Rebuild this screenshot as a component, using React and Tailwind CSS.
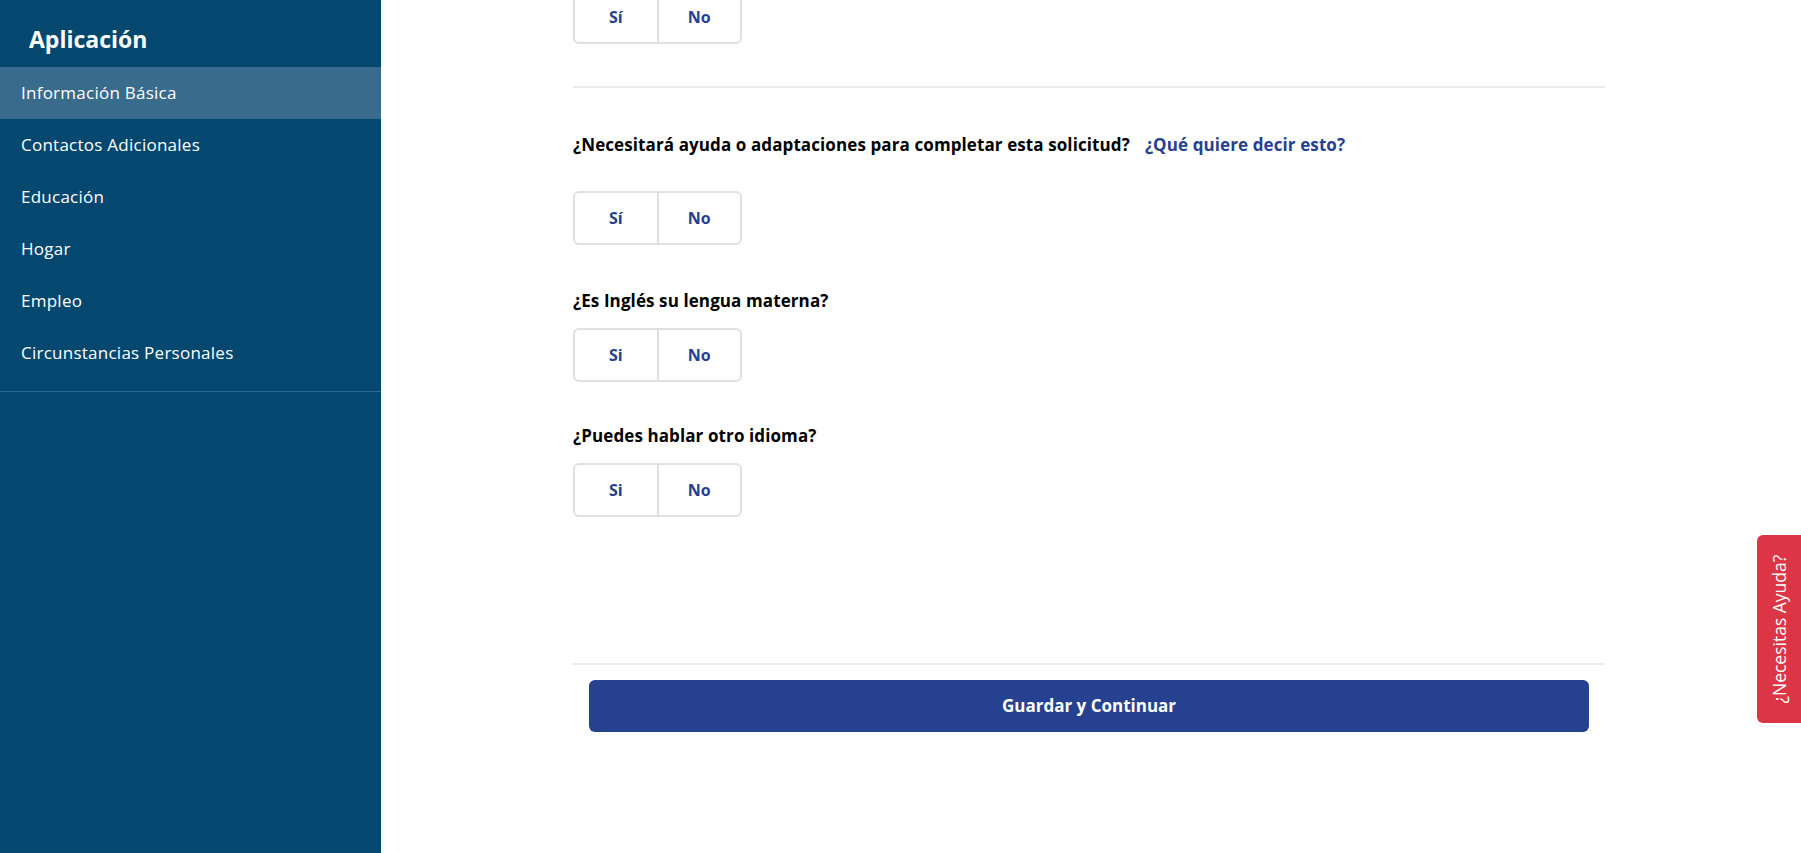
import React from "react";

const navItems = [
  "Información Básica",
  "Contactos Adicionales",
  "Educación",
  "Hogar",
  "Empleo",
  "Circunstancias Personales",
];

function YesNo({ yes }) {
  return (
    <div className="flex w-[169px] h-[54px] rounded-[6px] border-2 border-[#e0e0e0] overflow-hidden">
      <button className="flex-1 flex items-center justify-center text-[16px] font-bold text-[#26418f]">
        {yes}
      </button>
      <div className="w-[2px] bg-[#e0e0e0]" />
      <button className="flex-1 flex items-center justify-center text-[16px] font-bold text-[#26418f]">
        No
      </button>
    </div>
  );
}

export default function App() {
  return (
    <div
      className="flex w-full h-[853px] overflow-hidden bg-white relative"
      style={{ fontFamily: "'Open Sans', 'Noto Sans', sans-serif" }}
    >
      <aside className="w-[381px] shrink-0 h-full bg-[#04486f] text-white">
        <div className="h-[67px] pl-[29px] flex items-center pt-[10px]">
          <h1 className="text-[23px] leading-[30px] font-bold">Aplicación</h1>
        </div>
        <nav className="flex flex-col">
          {navItems.map((item, i) => (
            <div
              key={item}
              className={`h-[52px] flex items-center pl-[21px] text-[17px] tracking-[0.25px] ${
                i === 0 ? "bg-[#386b8c]" : ""
              }`}
            >
              {item}
            </div>
          ))}
        </nav>
        <div className="mt-[12px] h-px bg-[#2f6c8f]" />
      </aside>

      <main className="flex-1 h-full overflow-hidden">
        <div className="w-[1032px] ml-[192px] -mt-[10px]">
          <YesNo yes="Sí" />
          <div className="mt-[42px] h-[2px] bg-[#ebebeb]" />
          <div className="mt-[46px] flex items-center gap-[15px] text-[17px] tracking-[0.1px] leading-[22px] font-bold">
            <span className="text-black">
              ¿Necesitará ayuda o adaptaciones para completar esta solicitud?
            </span>
            <a className="text-[#26418f]">¿Qué quiere decir esto?</a>
          </div>
          <div className="mt-[35px]">
            <YesNo yes="Sí" />
          </div>
          <p className="mt-[45px] text-[17px] tracking-[0.1px] leading-[22px] font-bold text-black">
            ¿Es Inglés su lengua materna?
          </p>
          <div className="mt-[16px]">
            <YesNo yes="Si" />
          </div>
          <p className="mt-[43px] text-[17px] tracking-[0.1px] leading-[22px] font-bold text-black">
            ¿Puedes hablar otro idioma?
          </p>
          <div className="mt-[16px]">
            <YesNo yes="Si" />
          </div>
          <div className="mt-[146px] h-[2px] bg-[#ebebeb]" />
          <div className="px-[16px] mt-[15px]">
            <button className="w-full h-[52px] rounded-[6px] bg-[#26418f] text-white text-[17px] font-bold">
              Guardar y Continuar
            </button>
          </div>
        </div>
      </main>

      <div className="absolute right-0 top-[535px] w-[44px] h-[188px] bg-[#dc3545] rounded-l-[6px] flex items-center justify-center">
        <span className="-rotate-90 whitespace-nowrap text-white text-[17.5px]">
          ¿Necesitas Ayuda?
        </span>
      </div>
    </div>
  );
}
